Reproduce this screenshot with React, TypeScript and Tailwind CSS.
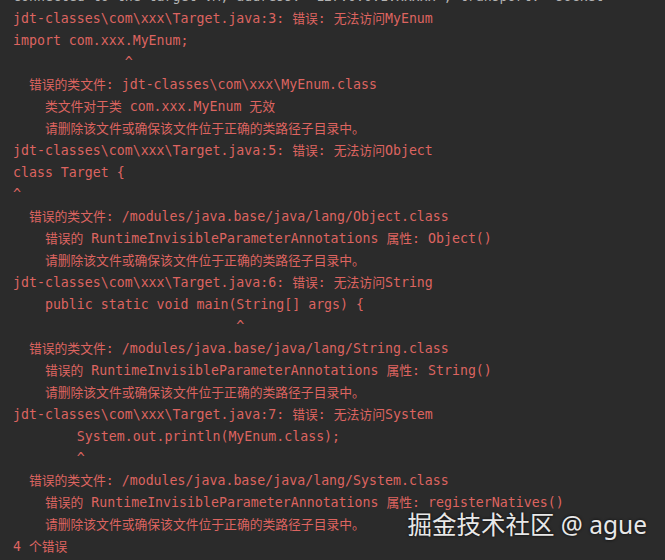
const CJK = /[\u3000-\u303f\u4e00-\u9fff\uff00-\uffef]/;
const CJK_RUN = /([\u3000-\u303f\u4e00-\u9fff\uff00-\uffef]+)/;

// javac output below the debugger banner
const output: string[] = [
  "jdt-classes\\com\\xxx\\Target.java:3: 错误: 无法访问MyEnum",
  "import com.xxx.MyEnum;",
  "              ^",
  "  错误的类文件: jdt-classes\\com\\xxx\\MyEnum.class",
  "    类文件对于类 com.xxx.MyEnum 无效",
  "    请删除该文件或确保该文件位于正确的类路径子目录中。",
  "jdt-classes\\com\\xxx\\Target.java:5: 错误: 无法访问Object",
  "class Target {",
  "^",
  "  错误的类文件: /modules/java.base/java/lang/Object.class",
  "    错误的 RuntimeInvisibleParameterAnnotations 属性: Object()",
  "    请删除该文件或确保该文件位于正确的类路径子目录中。",
  "jdt-classes\\com\\xxx\\Target.java:6: 错误: 无法访问String",
  "    public static void main(String[] args) {",
  "                            ^",
  "  错误的类文件: /modules/java.base/java/lang/String.class",
  "    错误的 RuntimeInvisibleParameterAnnotations 属性: String()",
  "    请删除该文件或确保该文件位于正确的类路径子目录中。",
  "jdt-classes\\com\\xxx\\Target.java:7: 错误: 无法访问System",
  "        System.out.println(MyEnum.class);",
  "        ^",
  "  错误的类文件: /modules/java.base/java/lang/System.class",
  "    错误的 RuntimeInvisibleParameterAnnotations 属性: registerNatives()",
  "    请删除该文件或确保该文件位于正确的类路径子目录中。",
  "4 个错误",
];

function Line({ text, className = "" }: { text: string; className?: string }) {
  const parts = text.split(CJK_RUN);
  return (
    <div className={`h-[22px] leading-[22px] whitespace-pre shrink-0 ${className}`}>
      {parts.map((p, i) =>
        CJK.test(p) ? (
          <span key={i} className="text-[12.8px]">
            {p}
          </span>
        ) : (
          p
        )
      )}
    </div>
  );
}

export default function App() {
  return (
    <div className="relative w-[665px] h-[560px] overflow-hidden bg-[#2b2b2b] pl-[13px] font-['DejaVu_Sans_Mono','Noto_Sans_CJK_SC',monospace] text-[13.25px] text-[#dd6460]">
      <div className="h-[8px] overflow-hidden flex flex-col justify-end">
        <Line
          text="Connected to the target VM, address: '127.0.0.1:xxxxx', transport: 'socket'"
          className="text-[#b4b4b4]"
        />
      </div>
      {output.map((t, i) => (
        <Line key={i} text={t} />
      ))}

      <div className="absolute right-[18px] top-[513px] whitespace-pre leading-none text-[24.5px] text-[#e8e8e8] font-['Noto_Sans','Noto_Sans_CJK_SC',sans-serif] [text-shadow:0_0_3px_rgba(0,0,0,0.85)]">
        掘金技术社区 @ ague
      </div>
    </div>
  );
}
